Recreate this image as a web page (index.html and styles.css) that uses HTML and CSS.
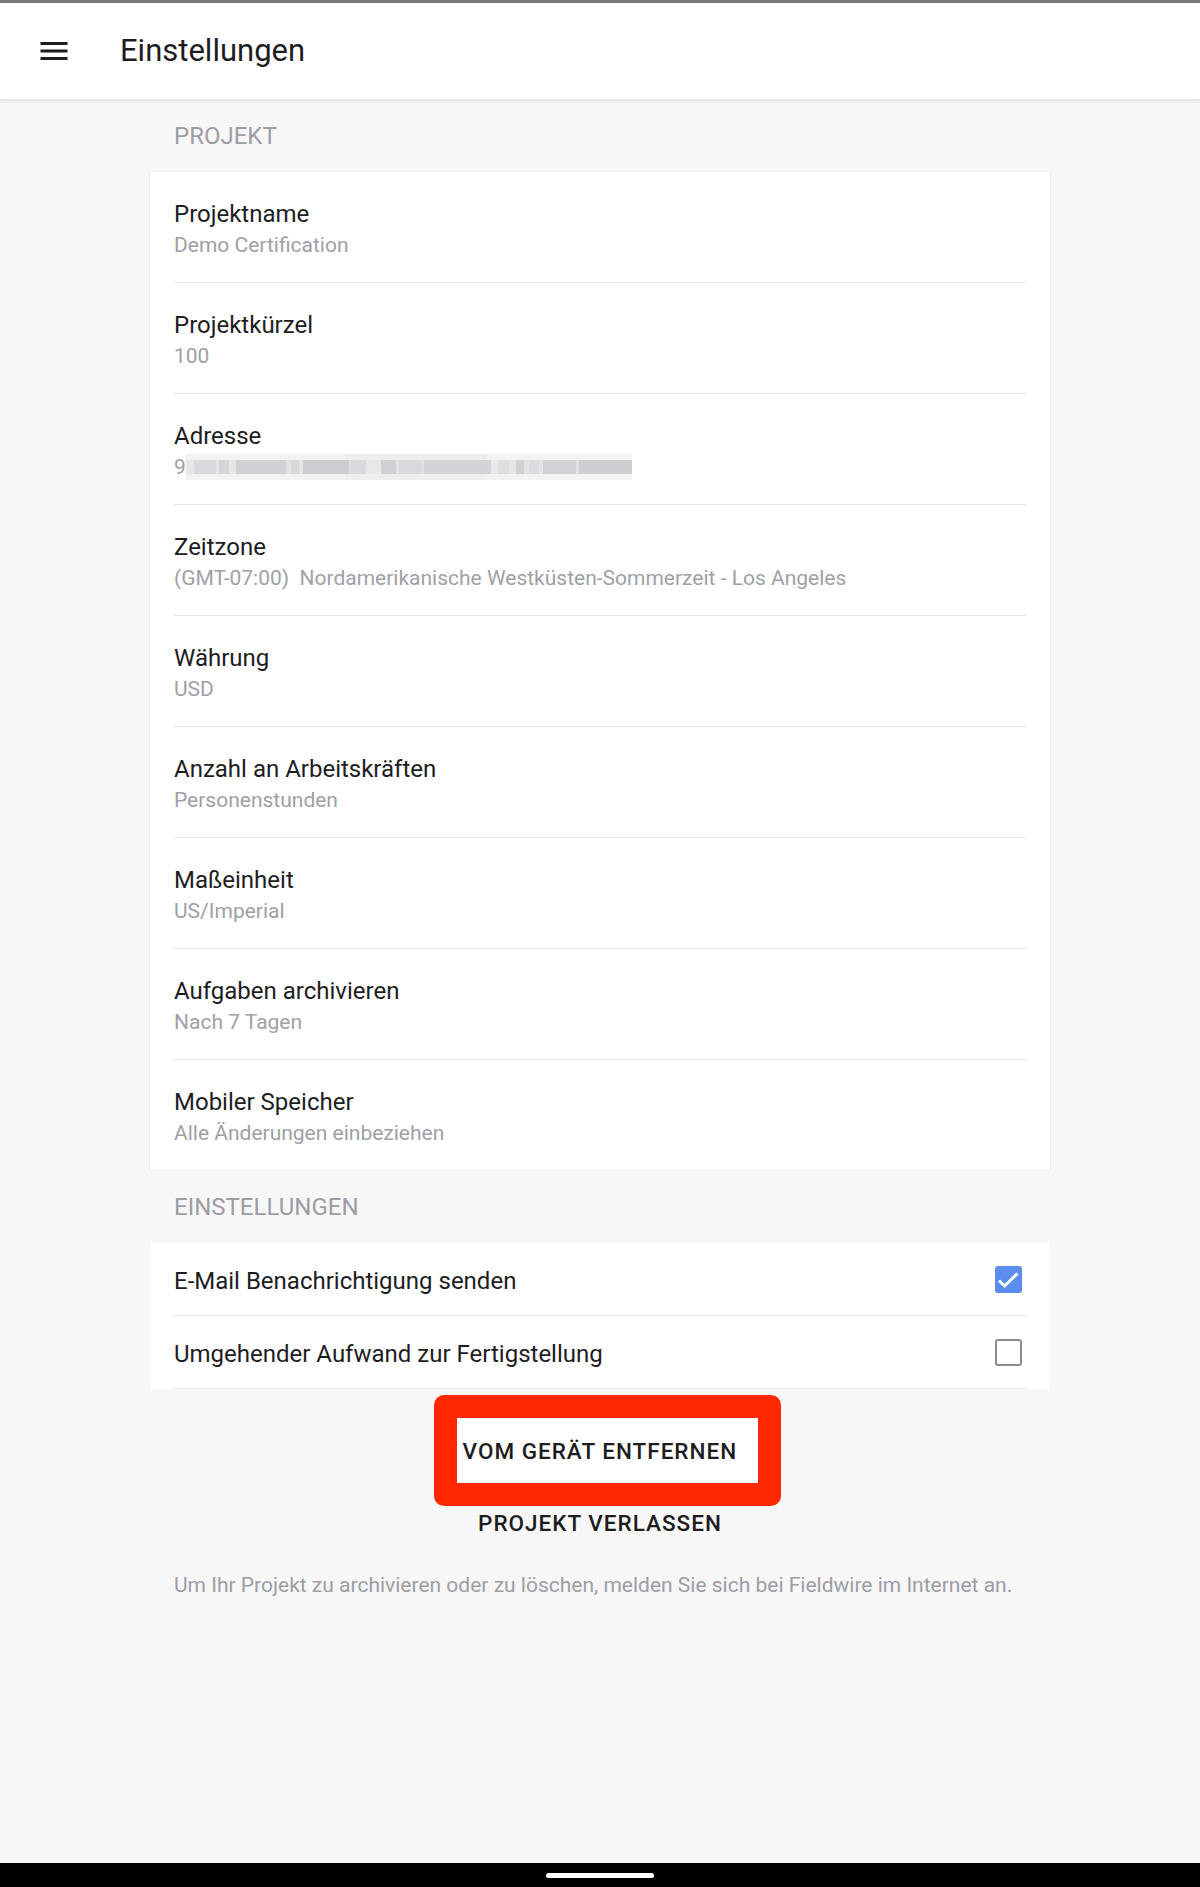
FILE: index.html
```html
<!DOCTYPE html>
<html lang="de">
  <head>
    <meta charset="utf-8" />
    <title>Einstellungen</title>
    <link rel="stylesheet" href="styles.css">
  </head>
  <body>
    <div class="status-strip"></div>
    <header class="toolbar">
      <svg class="menu-icon" width="36" height="36" viewBox="0 0 24 24" aria-hidden="true">
        <path d="M3 18h18v-2H3v2zm0-5h18v-2H3v2zm0-7v2h18V6H3z" fill="#1d1d1f" />
      </svg>
      <h1 class="toolbar-title">Einstellungen</h1>
    </header>

    <main class="settings">
      <div class="section-label">PROJEKT</div>
      <ul class="card">
        <li class="pref">
          <div class="pref-title">Projektname</div>
          <div class="pref-summary">Demo Certification</div>
        </li>
        <li class="pref">
          <div class="pref-title">Projektkürzel</div>
          <div class="pref-summary">100</div>
        </li>
        <li class="pref">
          <div class="pref-title">Adresse</div>
          <div class="pref-summary address">
            <span>9</span>
            <span class="mosaic"></span>
          </div>
        </li>
        <li class="pref">
          <div class="pref-title">Zeitzone</div>
          <div class="pref-summary">(GMT-07:00)&nbsp; Nordamerikanische Westküsten-Sommerzeit - Los Angeles</div>
        </li>
        <li class="pref">
          <div class="pref-title">Währung</div>
          <div class="pref-summary">USD</div>
        </li>
        <li class="pref">
          <div class="pref-title">Anzahl an Arbeitskräften</div>
          <div class="pref-summary">Personenstunden</div>
        </li>
        <li class="pref">
          <div class="pref-title">Maßeinheit</div>
          <div class="pref-summary">US/Imperial</div>
        </li>
        <li class="pref">
          <div class="pref-title">Aufgaben archivieren</div>
          <div class="pref-summary">Nach 7 Tagen</div>
        </li>
        <li class="pref">
          <div class="pref-title">Mobiler Speicher</div>
          <div class="pref-summary">Alle Änderungen einbeziehen</div>
        </li>
      </ul>

      <div class="section-label">EINSTELLUNGEN</div>
      <ul class="card card-checks">
        <li class="pref-check">
          <span class="check-label">E-Mail Benachrichtigung senden</span>
          <span class="checkbox checked">
            <svg width="27" height="27" viewBox="0 0 27 27" aria-hidden="true">
              <polyline points="4,14.5 9.5,20 22.5,7.5" fill="none" stroke="#fff" stroke-width="3" />
            </svg>
          </span>
        </li>
        <li class="pref-check">
          <span class="check-label">Umgehender Aufwand zur Fertigstellung</span>
          <span class="checkbox"></span>
        </li>
      </ul>

      <div class="actions">
        <button class="text-btn marked">VOM GERÄT ENTFERNEN</button>
        <button class="text-btn">PROJEKT VERLASSEN</button>
      </div>

      <p class="note">Um Ihr Projekt zu archivieren oder zu löschen, melden Sie sich bei Fieldwire im Internet an.</p>
    </main>

    <div class="nav-bar"><span class="nav-handle"></span></div>
  </body>
</html>
```

FILE: styles.css
```css
body {
  margin: 0;
  min-height: 100vh;
  display: flex;
  flex-direction: column;
  background: #f7f7f7;
  color: #1d1d1f;
  font-family: Roboto, "Noto Sans", "Liberation Sans", sans-serif;
}

.status-strip {
  height: 3px;
  background: #777;
}

.toolbar {
  position: relative;
  z-index: 1;
  height: 96px;
  display: flex;
  align-items: center;
  background: #fff;
  box-shadow: 0 2px 4px rgba(0, 0, 0, 0.1);
}

.menu-icon {
  margin-left: 36px;
  margin-right: 48px;
}

.toolbar-title {
  margin: 0;
  font-size: 31px;
  font-weight: 400;
  line-height: 36px;
}

.settings {
  flex: 1;
  width: 900px;
  margin: 0 auto;
}

.section-label {
  padding: 22px 24px 21px;
  font-size: 24px;
  line-height: 30px;
  color: #9d9da5;
}

ul {
  list-style-type: none;
  margin: 0;
  padding: 0;
}

.card {
  background: #fff;
  box-shadow: 0 0 1px rgba(0, 0, 0, 0.18);
}

.pref {
  margin: 0 24px;
  padding: 27px 0 24px;
  border-bottom: 1px solid #e6e6e6;
}

.pref:last-child {
  border-bottom: none;
}

.pref-title {
  font-size: 24px;
  line-height: 30px;
}

.pref-summary {
  margin-top: 3px;
  font-size: 21px;
  line-height: 26px;
  color: #a0a0a6;
  white-space: pre;
}

.address {
  display: flex;
  align-items: center;
}

/* pixelated (blurred) address */
.mosaic {
  width: 446px;
  height: 26px;
  background:
    linear-gradient(90deg,
      #e6e6e9 0 8px, #d9d9dd 8px 30px, #e4e4e7 30px 33px,
      #d6d6da 33px 43px, #e6e6e9 43px 50px, #d0d0d5 50px 100px,
      #e2e2e5 100px 105px, #d8d8dc 105px 113px, #e4e4e7 113px 117px,
      #cdcdd2 117px 163px, #dedee1 163px 165px, #dadade 165px 180px,
      #e8e8eb 180px 195px, #cfcfd4 195px 210px, #e2e2e5 210px 213px,
      #d9d9dd 213px 235px, #e0e0e3 235px 238px, #d4d4d8 238px 305px,
      #e8e8eb 305px 312px, #dfdfe2 312px 323px, #e6e6e9 323px 330px,
      #d0d0d5 330px 338px, #e3e3e6 338px 343px, #dcdce0 343px 353px,
      #e4e4e7 353px 357px, #d2d2d6 357px 390px, #e0e0e3 390px 393px,
      #ceced3 393px 446px) 0 6px / 100% 14px no-repeat,
    linear-gradient(90deg,
      #f2f2f4 0 160px, #eeeef0 160px 300px, #f3f3f5 300px 446px);
}

.card-checks {
  box-shadow: none;
}

.pref-check {
  height: 72px;
  margin: 0 24px;
  display: flex;
  align-items: center;
  justify-content: space-between;
  border-bottom: 1px solid #e6e6e6;
  font-size: 24px;
}

.check-label {
  padding-top: 3px;
}

.checkbox {
  box-sizing: border-box;
  width: 27px;
  height: 27px;
  margin-right: 4px;
  border: 2.5px solid #8c8c8c;
  border-radius: 3px;
}

.checkbox.checked {
  border: none;
  background: #5b8def;
}

.checkbox svg {
  display: block;
}

.actions {
  display: flex;
  flex-direction: column;
  align-items: center;
  margin-top: 6px;
}

.text-btn {
  padding: 0;
  border: none;
  background: none;
  font-family: inherit;
  font-size: 22.5px;
  font-weight: 500;
  line-height: 26px;
  letter-spacing: 1px;
  color: #1d1d1f;
}

.text-btn.marked {
  box-sizing: border-box;
  width: 347px;
  height: 111px;
  margin-left: 14px;
  padding: 0 19px 0 6px;
  border: 23px solid #ff2800;
  border-radius: 10px;
  background: #fff;
  text-align: left;
}

.text-btn + .text-btn {
  margin-top: 4px;
}

.note {
  margin: 35px 0 0;
  padding: 0 24px;
  font-size: 21px;
  line-height: 28px;
  color: #9d9da5;
}

.nav-bar {
  height: 24px;
  display: flex;
  align-items: center;
  justify-content: center;
  background: #000;
}

.nav-handle {
  width: 108px;
  height: 5px;
  border-radius: 3px;
  background: #fff;
}
```
